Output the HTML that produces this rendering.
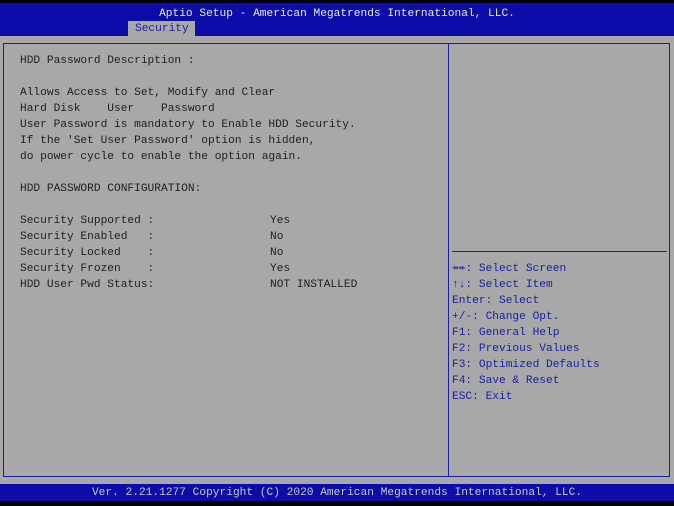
<!DOCTYPE html><html><head><style>
body{margin:0;width:674px;height:506px;background:#000;position:relative;overflow:hidden;font-family:"Liberation Mono","DejaVu Sans Mono",monospace;font-size:11.2px}
.t{position:absolute;white-space:pre;line-height:16px}
</style></head><body>
<div style="position:absolute;left:0;top:3px;width:674px;height:33px;background:#0c0ca8"></div>
<div class="t" style="left:0;width:674px;text-align:center;top:6px;color:#e8e8e8">Aptio Setup - American Megatrends International, LLC.</div>
<div style="position:absolute;left:128px;top:21px;width:67px;height:15px;background:#a8a8a8"></div>
<div class="t" style="left:135px;top:21px;color:#1c1ca8">Security</div>
<div style="position:absolute;left:0;top:36px;width:674px;height:448px;background:#a8a8a8"></div>
<div style="position:absolute;left:3px;top:43px;width:665px;height:432px;border:1px solid #1c1ca8"></div>
<div style="position:absolute;left:448px;top:43px;width:1px;height:433px;background:#1c1ca8"></div>
<div style="position:absolute;left:452px;top:251px;width:215px;height:1px;background:#1c1ca8"></div>
<div class="t" style="left:20px;top:53px;color:#202020">HDD Password Description :

Allows Access to Set, Modify and Clear
Hard Disk    User    Password
User Password is mandatory to Enable HDD Security.
If the 'Set User Password' option is hidden,
do power cycle to enable the option again.

HDD PASSWORD CONFIGURATION:

Security Supported :
Security Enabled   :
Security Locked    :
Security Frozen    :
HDD User Pwd Status:</div>
<div class="t" style="left:270px;top:213px;color:#202020">Yes
No
No
Yes
NOT INSTALLED</div>
<div class="t" style="left:452px;top:261px;color:#1c1ca8">⇸⇷: Select Screen
↑↓: Select Item
Enter: Select
+/-: Change Opt.
F1: General Help
F2: Previous Values
F3: Optimized Defaults
F4: Save &amp; Reset
ESC: Exit</div>
<div style="position:absolute;left:0;top:484px;width:674px;height:17px;background:#0c0ca8"></div>
<div class="t" style="left:0;width:674px;text-align:center;top:485px;color:#c8c8c8">Ver. 2.21.1277 Copyright (C) 2020 American Megatrends International, LLC.</div>
</body></html>
